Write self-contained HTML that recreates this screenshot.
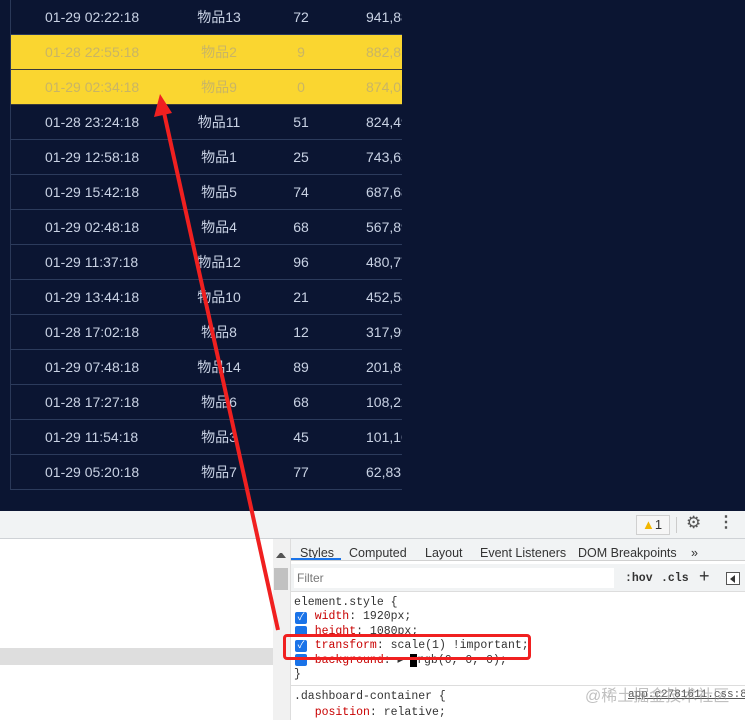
<!DOCTYPE html>
<html><head><meta charset="utf-8"><style>
*{margin:0;padding:0;box-sizing:border-box}
body{width:745px;height:720px;overflow:hidden;position:relative;background:#fff;font-family:"Liberation Sans","Noto Sans CJK SC",sans-serif}
#dark{position:absolute;left:0;top:0;width:745px;height:511px;background:#0b1532}
.tbl{position:absolute;left:10px;top:0;width:392px;border-left:1px solid #2a3858;overflow:hidden}
.row{height:35px;border-bottom:1px solid #2c3b5c;position:relative;color:#c9d2e4;font-size:14px;line-height:34px}
.row.y{background:#fad630;color:#c9b565;border-bottom:1px solid #3a3a3a}
.row span{position:absolute;top:0}
.c1{left:34px}.c2{left:180px;width:56px;text-align:center}.c3{left:276px;width:28px;text-align:center}.c4{left:355px;white-space:nowrap}
.mono{font-family:"Liberation Mono",monospace;font-size:11.5px}
.abs{position:absolute}
</style></head><body>
<div id="dark">
<div class="tbl">
<div class="row"><span class="c1">01-29 02:22:18</span><span class="c2">物品13</span><span class="c3">72</span><span class="c4">941,88</span></div>
<div class="row y"><span class="c1">01-28 22:55:18</span><span class="c2">物品2</span><span class="c3">9</span><span class="c4">882,87</span></div>
<div class="row y"><span class="c1">01-29 02:34:18</span><span class="c2">物品9</span><span class="c3">0</span><span class="c4">874,05</span></div>
<div class="row"><span class="c1">01-28 23:24:18</span><span class="c2">物品11</span><span class="c3">51</span><span class="c4">824,49</span></div>
<div class="row"><span class="c1">01-29 12:58:18</span><span class="c2">物品1</span><span class="c3">25</span><span class="c4">743,63</span></div>
<div class="row"><span class="c1">01-29 15:42:18</span><span class="c2">物品5</span><span class="c3">74</span><span class="c4">687,68</span></div>
<div class="row"><span class="c1">01-29 02:48:18</span><span class="c2">物品4</span><span class="c3">68</span><span class="c4">567,89</span></div>
<div class="row"><span class="c1">01-29 11:37:18</span><span class="c2">物品12</span><span class="c3">96</span><span class="c4">480,77</span></div>
<div class="row"><span class="c1">01-29 13:44:18</span><span class="c2">物品10</span><span class="c3">21</span><span class="c4">452,58</span></div>
<div class="row"><span class="c1">01-28 17:02:18</span><span class="c2">物品8</span><span class="c3">12</span><span class="c4">317,99</span></div>
<div class="row"><span class="c1">01-29 07:48:18</span><span class="c2">物品14</span><span class="c3">89</span><span class="c4">201,83</span></div>
<div class="row"><span class="c1">01-28 17:27:18</span><span class="c2">物品6</span><span class="c3">68</span><span class="c4">108,22</span></div>
<div class="row"><span class="c1">01-29 11:54:18</span><span class="c2">物品3</span><span class="c3">45</span><span class="c4">101,16</span></div>
<div class="row"><span class="c1">01-29 05:20:18</span><span class="c2">物品7</span><span class="c3">77</span><span class="c4">62,83</span></div>
</div>
</div>
<!-- devtools top bar -->
<div class="abs" style="left:0;top:511px;width:745px;height:28px;background:#f1f3f4;border-bottom:1px solid #cfd2d6"></div>
<div class="abs" style="left:636px;top:515px;width:34px;height:20px;border:1px solid #d0d0d0;background:#f6f6f6;font-size:13px;line-height:18px;padding-left:5px;color:#333"><span style="color:#f2b600">▲</span>1</div>
<div class="abs" style="left:676px;top:517px;width:1px;height:16px;background:#ccc"></div>
<div class="abs" style="left:686px;top:513px;font-size:17px;color:#555">⚙</div>
<div class="abs" style="left:718px;top:512px;font-size:16px;color:#555;font-weight:bold">⋮</div>
<!-- left panel -->
<div class="abs" style="left:0;top:648px;width:273px;height:17px;background:#dedede"></div>
<div class="abs" style="left:273px;top:539px;width:17px;height:181px;background:#f1f1f1"></div>
<div class="abs" style="left:276px;top:553px;width:10px;height:0;border-left:4px solid transparent;border-right:4px solid transparent;border-bottom:5px solid #555"></div>
<div class="abs" style="left:274px;top:568px;width:14px;height:22px;background:#c1c1c1"></div>
<div class="abs" style="left:290px;top:539px;width:1px;height:181px;background:#ddd"></div>
<!-- tabs -->
<div class="abs" style="left:291px;top:539px;width:454px;height:22px;background:#f1f3f4;border-bottom:1px solid #d0d0d0;font-size:12.5px;color:#333;line-height:27px"></div>
<div class="abs" style="left:290px;top:540px;font-size:12.5px;color:#333;line-height:26px;white-space:nowrap">
<span class="abs" style="left:10px">Styles</span><span class="abs" style="left:59px">Computed</span><span class="abs" style="left:135px">Layout</span><span class="abs" style="left:190px">Event Listeners</span><span class="abs" style="left:288px">DOM Breakpoints</span><span class="abs" style="left:401px">»</span></div>
<div class="abs" style="left:291px;top:558px;width:50px;height:2px;background:#1a73e8"></div>
<div class="abs" style="left:294px;top:568px;width:320px;height:20px;background:#fff;font-size:12px;color:#777;line-height:20px;padding-left:3px">Filter</div>
<div class="abs" style="left:291px;top:564px;width:454px;height:28px;border-bottom:1px solid #ddd;z-index:-1;background:#f1f3f4"></div>
<div class="abs mono" style="left:625px;top:572px;font-weight:bold;color:#333">:hov</div>
<div class="abs mono" style="left:661px;top:572px;font-weight:bold;color:#333">.cls</div>
<div class="abs" style="left:699px;top:566px;font-size:18px;color:#333">+</div>
<div class="abs" style="left:726px;top:572px;width:14px;height:13px;border:1px solid #555;background:#fff"><div style="margin:2px 0 0 3px;width:0;height:0;border-top:4px solid transparent;border-bottom:4px solid transparent;border-right:5px solid #333"></div></div>
<!-- styles -->
<div class="abs mono" style="left:294px;top:596px;color:#333;line-height:14.4px;white-space:pre">element.style {
<span style="color:#c80000">   width</span>: 1920px;
<span style="color:#c80000">   height</span>: 1080px;
<span style="color:#c80000">   transform</span>: scale(1) !important;
<span style="color:#c80000">   background</span>: ▸ <span style="background:#000">&nbsp;</span>rgb(0, 0, 0);
}</div>
<div class="abs" style="left:295px;top:612px;width:12px;height:12px;background:#1a73e8;border-radius:2px;color:#fff;font-size:10px;line-height:12px;text-align:center">✓</div>
<div class="abs" style="left:295px;top:626px;width:12px;height:10px;background:#1a73e8;border-radius:2px"></div>
<div class="abs" style="left:295px;top:640px;width:12px;height:12px;background:#1a73e8;border-radius:2px;color:#fff;font-size:10px;line-height:12px;text-align:center">✓</div>
<div class="abs" style="left:295px;top:654px;width:12px;height:12px;background:#1a73e8;border-radius:2px"></div>
<div class="abs" style="left:291px;top:685px;width:454px;height:1px;background:#ddd"></div>
<div class="abs mono" style="left:294px;top:689px;color:#333;line-height:16px;white-space:pre">.dashboard-container {
<span style="color:#c80000">   position</span>: relative;</div>
<div class="abs mono" style="left:628px;top:689px;color:#555;text-decoration:underline;font-size:11px">app.c2781611.css:81</div>
<div class="abs" style="left:585px;top:682px;font-size:16px;color:rgba(140,140,140,0.55)">@稀土掘金技术社区</div>
<!-- annotation -->
<div class="abs" style="left:283px;top:634px;width:248px;height:26px;border:3px solid #f02020;border-radius:4px"></div>
<svg class="abs" style="left:0;top:0" width="745" height="720"><line x1="278" y1="630" x2="163" y2="108" stroke="#f02020" stroke-width="4"/><polygon points="160,94 154,117 172,113" fill="#f02020"/></svg>
</body></html>
